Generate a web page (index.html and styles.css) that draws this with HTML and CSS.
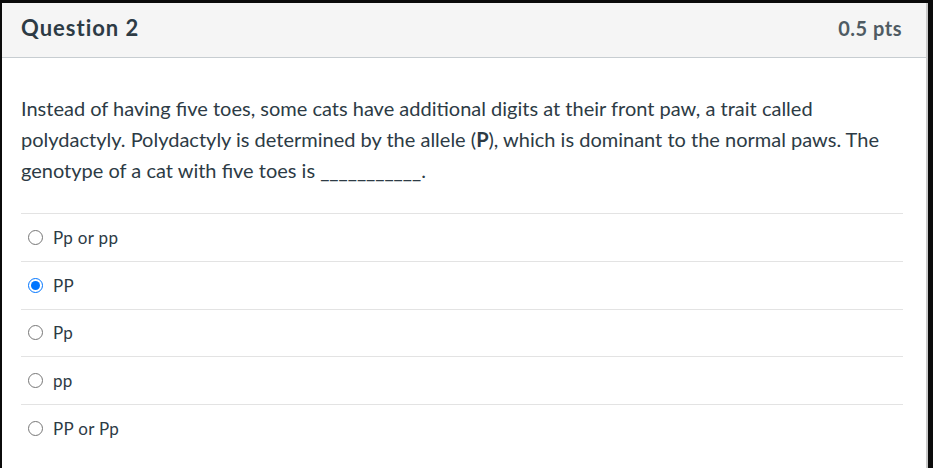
FILE: index.html
```html
<!DOCTYPE html>
<html lang="en">
<head>
<meta charset="utf-8">
<title>Question 2</title>
<link rel="stylesheet" href="styles.css">
</head>
<body>
<div class="frame">
  <div class="quiz">
    <div class="header">
      <h2 class="title">Question 2</h2>
      <span class="points">0.5 pts</span>
    </div>
    <div class="content">
      <p class="text">Instead of having five toes, some cats have additional digits at their front paw, a trait called polydactyly. Polydactyly is determined by the allele (<strong>P</strong>), which is dominant to the normal paws. The genotype of a cat with five toes is ___________.</p>
      <div class="answers">
        <label class="answer"><input type="radio" name="q2"><span>Pp or pp</span></label>
        <label class="answer"><input type="radio" name="q2" checked><span>PP</span></label>
        <label class="answer"><input type="radio" name="q2"><span>Pp</span></label>
        <label class="answer"><input type="radio" name="q2"><span>pp</span></label>
        <label class="answer"><input type="radio" name="q2"><span>PP or Pp</span></label>
      </div>
    </div>
  </div>
</div>
</body>
</html>
```
FILE: styles.css
```css
* { box-sizing: border-box; }
html, body { margin: 0; padding: 0; height: 100%; }
body {
  background: #0b0b0b;
  font-family: Lato, "Liberation Sans", sans-serif;
  color: #2d3b45;
}
.frame {
  display: flex;
  height: 100%;
  padding: 3px 0 0 2px;
}
.quiz {
  width: 926px;
  background: #fff;
  border-right: 2px solid #c9c9c9;
}
.header {
  height: 55px;
  background: #f5f5f5;
  border-bottom: 1px solid #c7cdd1;
  display: flex;
  align-items: center;
  justify-content: space-between;
  padding: 0 24px 5px 19px;
}
.title {
  margin: 0;
  font-size: 22px;
  font-weight: 700;
  letter-spacing: 1px;
  color: #2d3b45;
}
.points {
  font-size: 20px;
  font-weight: 700;
  letter-spacing: 0.5px;
  color: #4f5b63;
}
.content {
  padding: 35px 23px 0 19px;
}
.text {
  margin: 0 0 27px;
  font-size: 20px;
  line-height: 31px;
}
.text strong { font-weight: 700; }
.answers {
  display: flex;
  flex-direction: column;
}
.answer {
  height: 47.75px;
  border-top: 1px solid #e3e3e3;
  display: flex;
  align-items: center;
  font-size: 17px;
  letter-spacing: 0.3px;
  color: #2d3b45;
}
.answer input {
  width: 15px;
  height: 15px;
  margin: 0 10px 0 7px;
}
```
